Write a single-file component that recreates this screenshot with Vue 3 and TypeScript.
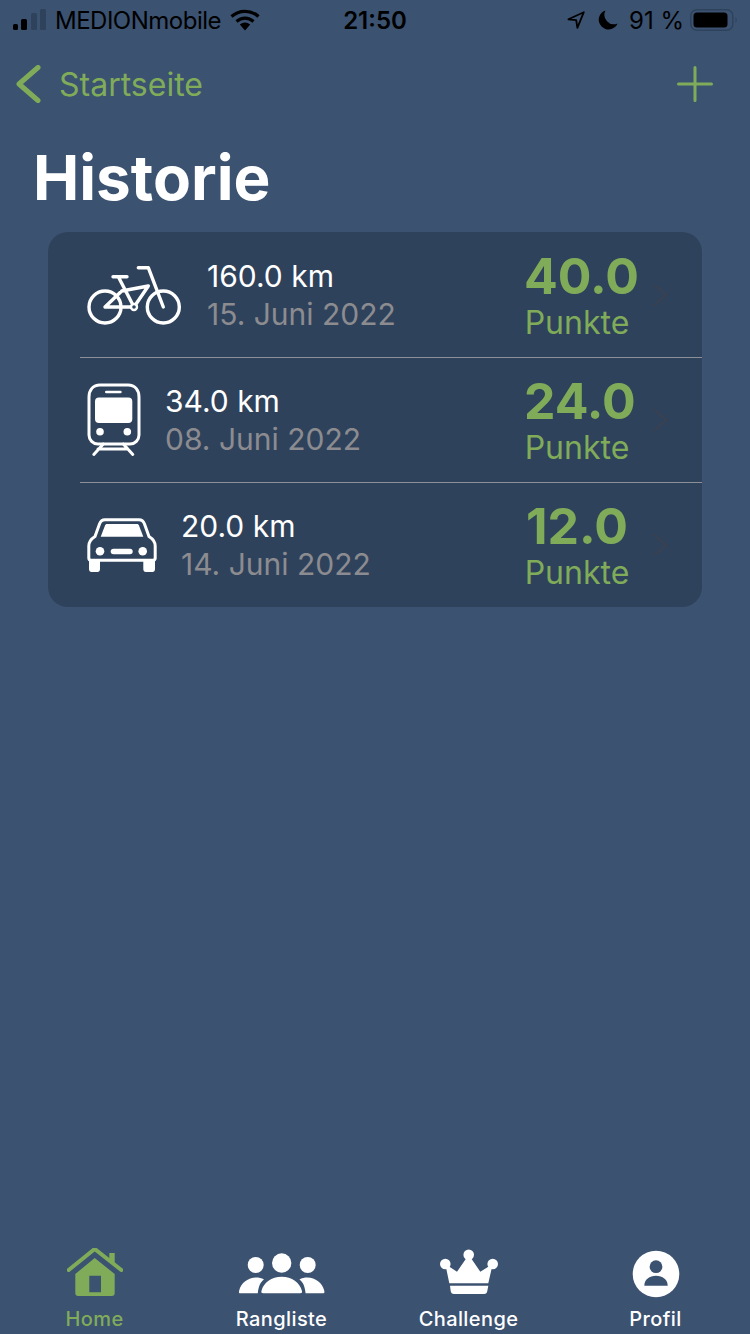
<template>
  <div class="page">
    <div class="status">
      <div class="status-left">
        <svg class="signal" width="34" height="22" viewBox="0 0 34 22">
          <rect x="0" y="15" width="5" height="6" rx="1.5" fill="#000" />
          <rect x="8" y="10" width="6" height="11" rx="1.5" fill="#000" />
          <rect x="18" y="4" width="6" height="17" rx="1.5" fill="#2f425c" />
          <rect x="27" y="0" width="6" height="21" rx="1.5" fill="#2f425c" />
        </svg>
        <span class="carrier">MEDIONmobile</span>
        <svg class="wifi" width="30" height="22" viewBox="0 0 30 22" fill="none" stroke="#000" stroke-width="3.2">
          <path d="M1.5 7.5C9 .6 21 .6 28.5 7.5" />
          <path d="M6.5 12.5C11.5 8 18.5 8 23.5 12.5" />
          <path d="M9.8 15.5L15 21.5L20.2 15.5C17 12.8 13 12.8 9.8 15.5Z" fill="#000" stroke="none" />
        </svg>
      </div>
      <span class="time">21:50</span>
      <div class="status-right">
        <svg width="18" height="18" viewBox="0 0 18 18" fill="none" stroke="#000" stroke-width="1.8" stroke-linejoin="round">
          <path d="M16.8 1.2L1.4 8.3L9.2 9.2L10.4 16.8Z" />
        </svg>
        <svg class="moon" width="20" height="20" viewBox="0 0 20 20">
          <path d="M7.5.4A9.8 9.8 0 1 0 19.6 13.5A9.5 9.5 0 0 1 7.5.4Z" fill="#000" />
        </svg>
        <span class="battery-text">91 %</span>
        <svg width="48" height="22" viewBox="0 0 48 22">
          <rect x=".8" y=".8" width="42" height="20.4" rx="6" fill="none" stroke="#2f425c" stroke-width="1.5" />
          <rect x="3.5" y="3.5" width="34" height="15" rx="3.5" fill="#000" />
          <path d="M45.5 8C47 8.5 47 13.5 45.5 14Z" fill="#2f425c" />
        </svg>
      </div>
    </div>

    <div class="nav">
      <div class="back">
        <svg width="26" height="38" viewBox="0 0 26 38" fill="none" stroke="#80ac5a" stroke-width="5" stroke-linecap="round" stroke-linejoin="round">
          <path d="M22 2.5L3 19L22 35.5" />
        </svg>
        <span>Startseite</span>
      </div>
      <svg width="36" height="36" viewBox="0 0 36 36" stroke="#80ac5a" stroke-width="3" stroke-linecap="round">
        <path d="M18 1.5V34.5M1.5 18H34.5" />
      </svg>
    </div>

    <h1 class="title">Historie</h1>

    <div class="card">
      <div v-for="row in rows" :key="row.date" class="row">
        <svg v-if="row.kind === 'bike'" class="vehicle" width="96" height="60" viewBox="0 0 96 60" fill="none" stroke="#fff" stroke-width="3.4" stroke-linecap="round" stroke-linejoin="round">
          <circle cx="18" cy="42" r="16" />
          <circle cx="76.3" cy="42" r="16" />
          <path d="M26 11.7H40M31.3 11.7L47 42M34.7 26L61.3 21M51.3 2.7H61.3L76.3 42M61.3 21L47 42M18 42H47M18 42L34.7 26" />
          <circle cx="47" cy="42" r="3" fill="#2f425c" stroke-width="2.4" />
        </svg>
        <svg v-else-if="row.kind === 'train'" class="vehicle" width="54" height="74" viewBox="0 0 54 74" fill="none" stroke="#fff" stroke-width="3" stroke-linecap="round">
          <path d="M13 2H41C48 2 52 7 52 14V52C52 57 48 61 43 61H11C6 61 2 57 2 52V14C2 7 6 2 13 2Z" />
          <rect x="8" y="14.5" width="37.3" height="25.5" rx="4" fill="#fff" stroke="none" />
          <rect x="18" y="7.7" width="16.7" height="2.6" rx="1.3" fill="#fff" stroke="none" />
          <circle cx="13" cy="48.7" r="3.8" fill="#fff" stroke="none" />
          <circle cx="40.3" cy="48.7" r="3.8" fill="#fff" stroke="none" />
          <path d="M16.3 61L6.8 71.5M36.3 61L45.8 71.5M11 66H41" />
        </svg>
        <svg v-else class="vehicle" width="70" height="56" viewBox="0 0 70 56">
          <path d="M18 2.8H52C55 2.8 56.5 4.3 57.5 7L62 19.5C66 22 68.2 25 68.2 29V41C68.2 42.5 67.5 43.2 66 43.2H4C2.5 43.2 1.8 42.5 1.8 41V29C1.8 25 4 22 8 19.5L12.5 7C13.5 4.3 15 2.8 18 2.8Z" fill="none" stroke="#fff" stroke-width="3" />
          <path d="M20 7H50C51 7 51.5 7.5 52 8.5L56.3 19.7H13.7L18 8.5C18.5 7.5 19 7 20 7Z" fill="#fff" />
          <circle cx="13" cy="34.3" r="4.3" fill="#fff" />
          <circle cx="55.7" cy="34.3" r="4.3" fill="#fff" />
          <rect x="23.7" y="31.7" width="22" height="5.6" rx="2.8" fill="#fff" />
          <path d="M2 44H13V52C13 54 12 55 10.5 55H4.5C3 55 2 54 2 52ZM56.3 44H68V52C68 54 67 55 65.5 55H58.8C57.3 55 56.3 54 56.3 52Z" fill="#fff" />
        </svg>
        <div class="info">
          <div class="km">{{ row.km }}</div>
          <div class="date">{{ row.date }}</div>
        </div>
        <div class="points">
          <div class="value">{{ row.points }}</div>
          <div class="unit">Punkte</div>
        </div>
        <svg class="chevron" width="16" height="24" viewBox="0 0 16 24" fill="none" stroke="#3a4150" stroke-width="2">
          <path d="M2 1.5L14 12L2 22.5" />
        </svg>
      </div>
    </div>

    <div class="tabbar">
      <div class="tab active">
        <svg width="56" height="50" viewBox="0 1 56 50">
          <path d="M42.3 6H47.7V18L42.3 14Z" fill="#80ac5a" />
          <path d="M1.7 23L27.7 2L54.3 23" fill="none" stroke="#80ac5a" stroke-width="4" stroke-linecap="round" stroke-linejoin="round" />
          <path fill-rule="evenodd" d="M27.7 11L47.7 27V46C47.7 48 46.7 49 44.7 49H11.3C9.3 49 8.3 48 8.3 46V27ZM22.3 28.7V45.3H34V28.7Z" fill="#80ac5a" />
        </svg>
        <span>Home</span>
      </div>
      <div class="tab">
        <svg width="87.4" height="50" viewBox="0 -2 87.4 50" fill="#fff">
          <circle cx="17.7" cy="15" r="8" />
          <circle cx="43.7" cy="13" r="9.7" />
          <circle cx="69.7" cy="15" r="8" />
          <path d="M25.3 43.3C23.5 43.3 23 42.5 23.5 40.8C25.5 32.5 33.5 26.7 43.7 26.7C53.9 26.7 61.9 32.5 63.9 40.8C64.4 42.5 63.9 43.3 62.1 43.3Z" />
          <path d="M2 43.3C.8 43.3.8 42 1.2 40.5C3 33 10 27.5 18 27.5C21 27.5 23.5 28 26 29.5C22.5 32 20.5 36 19.8 43.3Z" />
          <path d="M85.4 43.3C86.6 43.3 86.6 42 86.2 40.5C84.4 33 77.4 27.5 69.4 27.5C66.4 27.5 63.9 28 61.4 29.5C64.9 32 66.9 36 67.6 43.3Z" />
        </svg>
        <span>Rangliste</span>
      </div>
      <div class="tab">
        <svg width="60" height="50" viewBox="0 0 60 50" fill="#fff">
          <circle cx="29.7" cy="6.7" r="5.3" />
          <circle cx="6.3" cy="16" r="5.3" />
          <circle cx="53.7" cy="16" r="5.3" />
          <path d="M10.3 35.3H49.3L53.7 16L41.3 23.7L29.7 6.7L18 23.7L6.3 16Z" />
          <path d="M11 37.7H49.3L48.3 43C48 45 47 46 45 46H15C13 46 12 45 11.7 43Z" />
        </svg>
        <span>Challenge</span>
      </div>
      <div class="tab">
        <svg width="48" height="50" viewBox="0 -2 48 50">
          <circle cx="24" cy="24" r="23.3" fill="#fff" />
          <circle cx="24" cy="16.7" r="6.4" fill="#3b5271" />
          <path d="M12.3 35.7C12.3 29.5 17.5 25.7 24 25.7C30.5 25.7 35.7 29.5 35.7 35.7Z" fill="#3b5271" />
        </svg>
        <span>Profil</span>
      </div>
    </div>
  </div>
</template>

<script setup lang="ts">
interface HistoryRow {
  kind: 'bike' | 'train' | 'car';
  km: string;
  date: string;
  points: string;
}

const rows: HistoryRow[] = [
  { kind: 'bike', km: '160.0 km', date: '15. Juni 2022', points: '40.0' },
  { kind: 'train', km: '34.0 km', date: '08. Juni 2022', points: '24.0' },
  { kind: 'car', km: '20.0 km', date: '14. Juni 2022', points: '12.0' },
];
</script>

<style>
html,
body {
  background: #3b5271;
}
</style>

<style scoped>
.page {
  height: 1334px;
  overflow: hidden;
  display: flex;
  flex-direction: column;
  background: #3b5271;
  font-family: Inter, "Liberation Sans", sans-serif;
  color: #fff;
}

.status {
  height: 40px;
  display: grid;
  grid-template-columns: 1fr auto 1fr;
  align-items: center;
  color: #000;
  font-size: 24px;
}
.status-left {
  display: flex;
  align-items: center;
  padding-left: 13px;
}
.carrier {
  margin-left: 8px;
  letter-spacing: -0.5px;
}
.wifi {
  margin-left: 9px;
}
.time {
  font-weight: 600;
  font-size: 24px;
}
.status-right {
  display: flex;
  align-items: center;
  justify-content: flex-end;
  padding-right: 12px;
}
.moon {
  margin-left: 13px;
}
.battery-text {
  margin: 0 6px 0 11px;
}

.nav {
  height: 88px;
  display: flex;
  align-items: center;
  justify-content: space-between;
  padding: 0 37px 0 16px;
}
.back {
  display: flex;
  align-items: center;
  gap: 17px;
  color: #80ac5a;
  font-size: 32px;
}

.title {
  margin: 0;
  padding-left: 33px;
  height: 104px;
  font-size: 62px;
  font-weight: 700;
  line-height: 100px;
}

.card {
  margin: 0 48px;
  background: #2f425c;
  border-radius: 20px;
  padding-left: 32px;
}
.row {
  height: 125px;
  display: flex;
  align-items: center;
  padding: 0 34px 0 7px;
  border-top: 1px solid #8a8f98;
  box-sizing: border-box;
}
.row:first-child {
  border-top: none;
}
.vehicle {
  flex: none;
}
.info {
  margin-left: 24px;
  flex: 1;
}
.km {
  font-size: 30px;
  line-height: 38px;
}
.date {
  font-size: 30px;
  line-height: 38px;
  color: #8c8c90;
}
.points {
  width: 106px;
  text-align: center;
  color: #80ac5a;
  margin-right: 22px;
}
.value {
  font-size: 50px;
  font-weight: 700;
  line-height: 56px;
}
.unit {
  font-size: 32px;
  line-height: 38px;
}
.chevron {
  flex: none;
}

.tabbar {
  margin-top: auto;
  padding: 0 1px;
  height: 86px;
  display: grid;
  grid-template-columns: repeat(4, 1fr);
}
.tab {
  display: flex;
  flex-direction: column;
  align-items: center;
  font-size: 20px;
  font-weight: 500;
  letter-spacing: 0.4px;
  line-height: 26px;
}
.tab span {
  margin-top: 8px;
}
.tab.active {
  color: #80ac5a;
}
</style>
